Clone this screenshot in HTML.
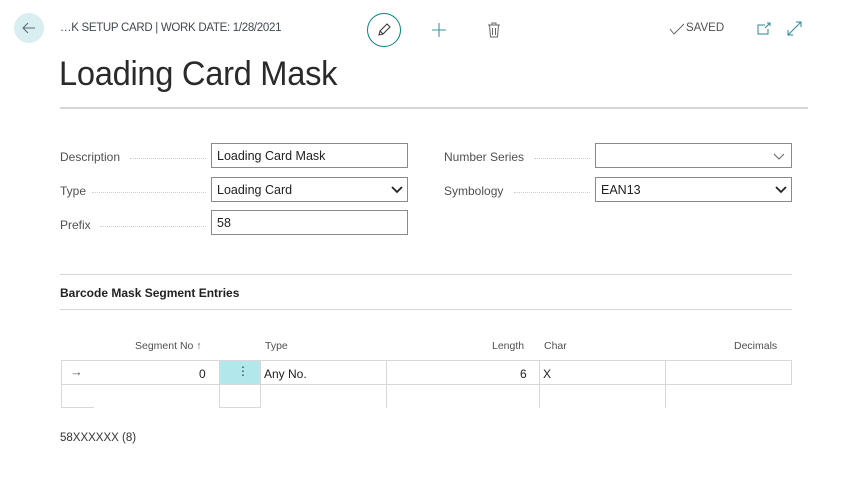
<!DOCTYPE html>
<html><head><style>
*{box-sizing:border-box;margin:0;padding:0}
body{width:845px;height:480px;background:#fff;font-family:"Liberation Sans",sans-serif;color:#212121;position:relative;overflow:hidden}
.a{position:absolute}
.lbl{font-size:12px;color:#505050}
.dots{border-bottom:1px dotted #d0d0d0;height:1px}
.inp{border:1px solid #8a8a8a;height:25px;font-size:12.5px;padding:5px 5px;color:#212121}
.hd{font-size:10.5px;color:#505050}
.cell{font-size:12px}
</style></head><body>
<div class="a" style="left:14px;top:13px;width:30px;height:30px;border-radius:50%;background:#d9eef0"></div>
<svg class="a" style="left:20px;top:19px" width="18" height="18" viewBox="0 0 18 18"><path d="M15 9H3M8 4L3 9l5 5" stroke="#5a6a70" stroke-width="1" fill="none"/></svg>
<div class="a" style="left:60px;top:22px;font-size:11.5px;color:#3f4a50;letter-spacing:-0.3px">…K SETUP CARD | WORK DATE: 1/28/2021</div>
<div class="a" style="left:367px;top:13px;width:34px;height:34px;border-radius:50%;border:1.3px solid #00827f"></div>
<svg class="a" style="left:376px;top:22px" width="16" height="16" viewBox="0 0 16 16"><path d="M3 13l1-4 7-7 3 3-7 7z M4 9l3 3" stroke="#333" stroke-width="1" fill="none"/></svg>
<svg class="a" style="left:431px;top:22px" width="16" height="16" viewBox="0 0 16 16"><path d="M8 1v14M1 8h14" stroke="#3a9aa0" stroke-width="1.1"/></svg>
<svg class="a" style="left:487px;top:22px" width="14" height="16" viewBox="0 0 14 16"><path d="M1 3h12M5 3V1h4v2M2.5 3l1 12h7l1-12M5.5 6v7M8.5 6v7" stroke="#666" stroke-width="1" fill="none"/></svg>
<svg class="a" style="left:669px;top:23px" width="16" height="12" viewBox="0 0 16 12"><path d="M1 6l4 5 10-10" stroke="#666" stroke-width="1" fill="none"/></svg>
<div class="a" style="left:686px;top:22px;font-size:11.5px;color:#505050">SAVED</div>
<svg class="a" style="left:757px;top:22px" width="14" height="14" viewBox="0 0 14 14"><path d="M8 3H1v9h10V7M10 1h3v3M13 1L8 6" stroke="#2a8a95" stroke-width="1" fill="none"/></svg>
<svg class="a" style="left:787px;top:21px" width="15" height="15" viewBox="0 0 15 15"><path d="M1 14L14 1M9 1h5v5M1 9v5h5" stroke="#2a8a95" stroke-width="1" fill="none"/></svg>
<div class="a" style="left:59px;top:55px;font-size:34px;color:#2a2a2a;letter-spacing:-0.3px;transform:scaleX(0.96);transform-origin:left">Loading Card Mask</div>
<div class="a" style="left:60px;top:107px;width:748px;height:2px;background:#d4d6d9"></div>

<div class="a lbl" style="left:60px;top:150px">Description</div><div class="a dots" style="left:130px;top:158px;width:76px"></div>
<div class="a inp" style="left:211px;top:143px;width:197px">Loading Card Mask</div>
<div class="a lbl" style="left:60px;top:184px">Type</div><div class="a dots" style="left:92px;top:192px;width:114px"></div>
<div class="a inp" style="left:211px;top:177px;width:197px">Loading Card</div>
<svg class="a" style="left:391px;top:184px" width="12" height="10" viewBox="0 0 12 10"><path d="M1 3l5 5 5-5" stroke="#222" stroke-width="1.8" fill="none"/></svg>
<div class="a lbl" style="left:60px;top:218px">Prefix</div><div class="a dots" style="left:100px;top:226px;width:106px"></div>
<div class="a inp" style="left:211px;top:210px;width:197px">58</div>
<div class="a lbl" style="left:444px;top:150px">Number Series</div><div class="a dots" style="left:534px;top:158px;width:56px"></div>
<div class="a inp" style="left:595px;top:143px;width:197px"></div>
<svg class="a" style="left:773px;top:151px" width="12" height="10" viewBox="0 0 12 10"><path d="M1 3l5 5 5-5" stroke="#666" stroke-width="1" fill="none"/></svg>
<div class="a lbl" style="left:444px;top:184px">Symbology</div><div class="a dots" style="left:514px;top:192px;width:76px"></div>
<div class="a inp" style="left:595px;top:177px;width:197px">EAN13</div>
<svg class="a" style="left:775px;top:184px" width="12" height="10" viewBox="0 0 12 10"><path d="M1 3l5 5 5-5" stroke="#222" stroke-width="1.8" fill="none"/></svg>

<div class="a" style="left:60px;top:274px;width:732px;height:1px;background:#d4d6d9"></div>
<div class="a" style="left:60px;top:286px;font-size:12px;font-weight:bold;color:#212121">Barcode Mask Segment Entries</div>
<div class="a" style="left:60px;top:309px;width:732px;height:1px;background:#d4d6d9"></div>

<div class="a hd" style="left:135px;top:340px">Segment No ↑</div>
<div class="a hd" style="left:265px;top:340px">Type</div>
<div class="a hd" style="left:492px;top:340px">Length</div>
<div class="a hd" style="left:544px;top:340px">Char</div>
<div class="a hd" style="left:734px;top:340px">Decimals</div>

<div class="a" style="left:61px;top:360px;width:731px;height:25px;border:1px solid #d8d8d8"></div>
<div class="a" style="left:219px;top:361px;width:42px;height:23px;background:#b2e7ec"></div>
<div class="a" style="left:237px;top:364px;font-size:12px;color:#333">⋮</div>
<div class="a" style="left:219px;top:360px;width:1px;height:48px;background:#d8d8d8"></div>
<div class="a" style="left:260px;top:360px;width:1px;height:48px;background:#d8d8d8"></div>
<div class="a" style="left:386px;top:360px;width:1px;height:48px;background:#d8d8d8"></div>
<div class="a" style="left:539px;top:360px;width:1px;height:48px;background:#d8d8d8"></div>
<div class="a" style="left:665px;top:360px;width:1px;height:48px;background:#d8d8d8"></div>
<div class="a" style="left:61px;top:384px;width:1px;height:24px;background:#d8d8d8"></div>
<div class="a" style="left:61px;top:407px;width:33px;height:1px;background:#d8d8d8"></div>
<div class="a" style="left:219px;top:407px;width:42px;height:1px;background:#d8d8d8"></div>
<div class="a" style="left:70px;top:364px;font-size:13px;color:#666">→</div>
<div class="a cell" style="left:199px;top:367px">0</div>
<div class="a cell" style="left:264px;top:367px">Any No.</div>
<div class="a cell" style="left:520px;top:367px">6</div>
<div class="a cell" style="left:543px;top:367px">X</div>
<div class="a" style="left:60px;top:432px;font-size:11.5px;color:#333">58XXXXXX (8)</div>
</body></html>
